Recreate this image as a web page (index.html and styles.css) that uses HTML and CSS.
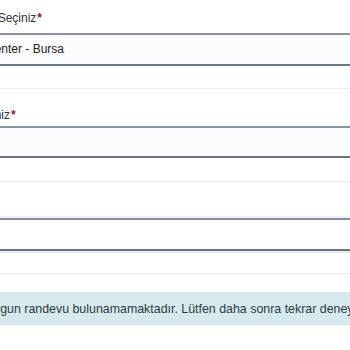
FILE: index.html
```html
<!DOCTYPE html>
<html lang="tr">
<head>
<meta charset="utf-8">
<link rel="stylesheet" href="styles.css">
</head>
<body>
<form class="form">
  <div class="field">
    <label class="label label-a">Merkez Seçiniz<span class="req">*</span></label>
    <div class="select select-a"><span class="value">Center - Bursa</span></div>
  </div>
  <div class="rule rule-a"></div>
  <div class="field">
    <label class="label label-b">Tarih Seçiniz<span class="req">*</span></label>
    <div class="select select-b"></div>
  </div>
  <div class="rule rule-b"></div>
  <div class="select select-c"></div>
  <div class="rule rule-c"></div>
  <div class="alert"><span class="alert-text">Uygun randevu bulunamamaktadır. Lütfen daha sonra tekrar deneyiniz.</span></div>
</form>
</body>
</html>
```

FILE: styles.css
```css
html, body {
  margin: 0;
  padding: 0;
  background: #ffffff;
  overflow: hidden;
}
.form {
  width: 380px;
  margin-left: -15px;
  font-family: "Liberation Sans", Arial, sans-serif;
  font-size: 12px;
  color: #2a2d31;
}
.field {
  display: flex;
  flex-direction: column;
}
.label {
  display: block;
  line-height: 16px;
  white-space: nowrap;
  color: #2f3236;
}
.label-a {
  margin-top: 10px;
  margin-bottom: 7px;
  text-indent: -30px;
}
.label-b {
  margin-top: 18px;
  margin-bottom: 3px;
  text-indent: -43px;
}
.req {
  color: #8e1b2e;
  font-weight: bold;
  margin-left: 1px;
}
.select {
  box-sizing: border-box;
  height: 33px;
  border-top: 2px solid #8a94a1;
  border-bottom: 2px solid #6d7784;
  background: #fbfcfe;
  line-height: 29px;
  white-space: nowrap;
}
.select-a .value {
  display: block;
  text-indent: 1px;
  color: #1f2226;
}
.select-b {
  height: 32px;
}
.select-c {
  margin-top: 36px;
  background: #ffffff;
  border-top: 2px solid #858f9c;
  border-bottom: 2px solid #6b7582;
  box-shadow: 0 -2px 0 #f1eef6, 0 2px 0 #e6e9ee;
}
.rule {
  height: 1px;
  background: #ececec;
}
.rule-a { margin-top: 22px; }
.rule-b { margin-top: 23px; }
.rule-c { margin-top: 22px; }
.alert {
  margin-top: 18px;
  height: 33px;
  background: #d6eaee;
  display: flex;
  align-items: center;
  white-space: nowrap;
  font-family: "Liberation Sans", Arial, sans-serif;
  font-size: 12.4px;
  color: #2c3b44;
}
.alert-text {
  display: block;
}
```
